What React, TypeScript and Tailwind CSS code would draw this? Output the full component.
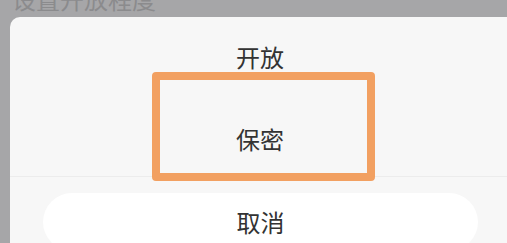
import React from 'react';

const font = { fontFamily: '"Noto Sans CJK SC", "Noto Sans", sans-serif' };

export default function App() {
  return (
    <div
      className="relative w-[507px] h-[243px] overflow-hidden bg-[#a6a6a8]"
      style={font}
    >
      {/* dimmed page title behind the sheet */}
      <p className="mt-[-13px] pl-[12px] text-[24px] leading-[24px] text-[#8b8b8d] whitespace-nowrap">
        设置开放程度
      </p>

      {/* action sheet */}
      <div className="ml-[10px] mt-[6px] w-[500px] h-[240px] rounded-tl-[10px] bg-[#f7f7f7] pt-[28px]">
        <div className="flex flex-col items-center">
          <span className="text-[24px] leading-[24px] text-[#333333]">开放</span>
          <span className="mt-[58px] text-[24px] leading-[24px] text-[#333333]">保密</span>
        </div>
        <div className="mt-[25px] h-px bg-[#ececec]" />
        <div className="mt-[16px] ml-[33px] w-[435px] h-[58px] rounded-full bg-white flex items-center justify-center">
          <span className="text-[24px] leading-[24px] text-[#333333]">取消</span>
        </div>
      </div>

      {/* annotation highlight */}
      <div className="absolute left-[152px] top-[72px] w-[223px] h-[109px] rounded-[4px] border-[8px] border-[#f2a061]" />
    </div>
  );
}
